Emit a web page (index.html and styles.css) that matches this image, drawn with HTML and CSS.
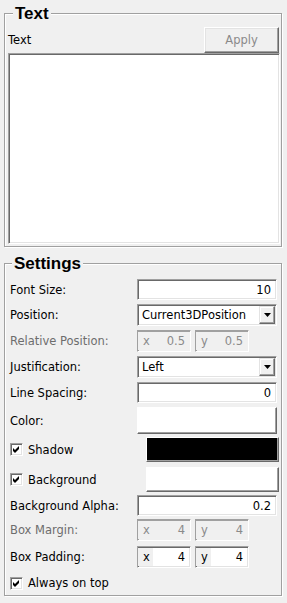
FILE: index.html
```html
<!DOCTYPE html>
<html lang="en">
<head>
    <meta charset="UTF-8">
    <title>Text Properties</title>
    <link rel="stylesheet" href="styles.css">
</head>
<body>
    <!-- Text group -->
    <fieldset class="group">
        <legend>Text</legend>
        <div class="text-body">
            <div class="text-head">
                <span>Text</span>
                <div class="btn apply">Apply</div>
            </div>
            <div class="text-edit"></div>
        </div>
    </fieldset>

    <!-- Settings group -->
    <fieldset class="group settings">
        <legend>Settings</legend>
        <div class="settings-body">
            <div class="row">
                <span class="label">Font Size:</span>
                <div class="field num h21">10</div>
            </div>
            <div class="row">
                <span class="label">Position:</span>
                <div class="field combo">Current3DPosition<span class="arrow"><svg width="7" height="4" viewBox="0 0 7 4"><polygon points="0,0 7,0 3.5,4" fill="#000"/></svg></span></div>
            </div>
            <div class="row">
                <span class="label disabled">Relative Position:</span>
                <div class="spin disabled"><span class="pre">x</span>0.5</div>
                <div class="spin disabled"><span class="pre">y</span>0.5</div>
            </div>
            <div class="row">
                <span class="label">Justification:</span>
                <div class="field combo">Left<span class="arrow"><svg width="7" height="4" viewBox="0 0 7 4"><polygon points="0,0 7,0 3.5,4" fill="#000"/></svg></span></div>
            </div>
            <div class="row">
                <span class="label">Line Spacing:</span>
                <div class="field num h21">0</div>
            </div>
            <div class="row">
                <span class="label">Color:</span>
                <div class="btn swatch color-btn"></div>
            </div>
            <div class="row gap3">
                <span class="check-label"><span class="check"><svg width="9" height="9" viewBox="0 0 9 9"><polygon points="1,3 3,5 7,1 7,4 3,8 1,6" fill="#000"/></svg></span>Shadow</span>
                <div class="btn swatch black"></div>
            </div>
            <div class="row gap5">
                <span class="check-label"><span class="check"><svg width="9" height="9" viewBox="0 0 9 9"><polygon points="1,3 3,5 7,1 7,4 3,8 1,6" fill="#000"/></svg></span>Background</span>
                <div class="btn swatch"></div>
            </div>
            <div class="row gap3">
                <span class="label">Background Alpha:</span>
                <div class="field num h21">0.2</div>
            </div>
            <div class="row gap3">
                <span class="label disabled">Box Margin:</span>
                <div class="spin disabled"><span class="pre">x</span>4</div>
                <div class="spin disabled"><span class="pre">y</span>4</div>
            </div>
            <div class="row gap5">
                <span class="label">Box Padding:</span>
                <div class="spin"><span class="pre">x</span>4</div>
                <div class="spin"><span class="pre">y</span>4</div>
            </div>
            <div class="row last">
                <span class="check-label"><span class="check"><svg width="9" height="9" viewBox="0 0 9 9"><polygon points="1,3 3,5 7,1 7,4 3,8 1,6" fill="#000"/></svg></span>Always on top</span>
            </div>
        </div>
    </fieldset>
</body>
</html>
```

FILE: styles.css
```css
* {
    margin: 0;
    padding: 0;
    box-sizing: border-box;
}
body {
    background: #f0f0f0;
    font-family: "DejaVu Sans", sans-serif;
    font-size: 11.5px;
    color: #000;
    padding: 4px 0 0 4px;
    width: 287px;
    height: 603px;
    overflow: hidden;
}
.group {
    width: 278px;
    border: 1px solid #a0a0a0;
    box-shadow: inset 1px 1px 0 #fff, 1px 1px 0 #fff;
}
.group legend {
    font-family: "Liberation Sans", sans-serif;
    font-weight: bold;
    font-size: 17px;
    line-height: 19px;
    padding: 0 2px;
    margin-left: 8px;
    background: #f0f0f0;
}
.settings {
    margin-top: 7px;
}
.settings legend {
    margin-left: 7px;
}

/* text group */
.text-body {
    padding: 4px 1px 2px 3px;
}
.text-head {
    display: flex;
    justify-content: space-between;
    align-items: center;
    height: 26px;
}
.text-edit {
    height: 191px;
    background: #fff;
    border: 1px solid;
    border-color: #a0a0a0 #fff #fff #a0a0a0;
    box-shadow: inset 1px 1px 0 #696969, inset -1px -1px 0 #e3e3e3;
}

/* raised buttons */
.btn {
    border: 1px solid;
    border-color: #fff #696969 #696969 #fff;
    box-shadow: inset -1px -1px 0 #a0a0a0, inset 1px 1px 0 #e3e3e3;
    background: #f0f0f0;
}
.apply {
    width: 75px;
    height: 26px;
    margin-right: 1px;
    display: flex;
    align-items: center;
    justify-content: center;
    color: #8a8a8a;
}

/* settings rows */
.settings-body {
    padding: 6px 2px 1px 5px;
}
.row {
    display: flex;
    align-items: center;
    margin-top: 4px;
}
.row:first-child {
    margin-top: 0;
}
.row.gap3 {
    margin-top: 3px;
}
.row.gap5 {
    margin-top: 5px;
}
.row.last {
    height: 22px;
}
.label {
    width: 127px;
    flex: none;
}
.disabled {
    color: #6d6d6d;
}
.field {
    flex: 1;
    margin-right: 2px;
    height: 22px;
    background: #fff;
    border: 1px solid;
    border-color: #a0a0a0 #fff #fff #a0a0a0;
    box-shadow: inset 1px 1px 0 #696969, inset -1px -1px 0 #e3e3e3;
    display: flex;
    align-items: center;
}
.field.h21 {
    height: 21px;
}
.num {
    justify-content: flex-end;
    padding-right: 5px;
}
.combo {
    padding-left: 4px;
    position: relative;
}
.arrow {
    position: absolute;
    top: 1px;
    right: 1px;
    bottom: 1px;
    width: 16px;
    background: #f0f0f0;
    border: 1px solid;
    border-color: #e3e3e3 #696969 #696969 #e3e3e3;
    box-shadow: inset -1px -1px 0 #a0a0a0, inset 1px 1px 0 #fff;
    display: flex;
    align-items: center;
    justify-content: center;
}
.arrow svg {
    display: block;
}

/* spin boxes */
.spin {
    width: 54px;
    height: 22px;
    margin-right: 4px;
    background: #fff;
    border: 1px solid;
    border-color: #a0a0a0 #fff #fff #a0a0a0;
    box-shadow: inset 1px 1px 0 #696969, inset -1px -1px 0 #e3e3e3;
    display: flex;
    align-items: center;
    justify-content: space-between;
    padding-right: 5px;
}
.spin .pre {
    align-self: stretch;
    display: flex;
    align-items: center;
    padding: 0 3px 0 5px;
    margin: 1px 0;
    background: #f0f0f0;
}
.spin.disabled {
    background: #f0f0f0;
    color: #8a8a8a;
    box-shadow: inset 1px 1px 0 #a0a0a0;
    border-color: #a0a0a0 #fff #fff #a0a0a0;
}

/* checkbox rows */
.check-label {
    width: 136px;
    flex: none;
    display: flex;
    align-items: center;
}
.check {
    width: 13px;
    height: 13px;
    margin-right: 5px;
    background: #fff;
    border: 1px solid;
    border-color: #a0a0a0 #fff #fff #a0a0a0;
    box-shadow: inset 1px 1px 0 #696969, inset -1px -1px 0 #e3e3e3;
    display: flex;
    align-items: center;
    justify-content: center;
}
.check svg {
    display: block;
}

/* colour buttons */
.swatch {
    flex: 1;
    height: 25px;
    background: #fff;
    box-shadow: inset -1px -1px 0 #a0a0a0;
}
.swatch.black {
    background: #000;
}
.color-btn {
    height: 27px;
    margin-right: 2px;
}
```
